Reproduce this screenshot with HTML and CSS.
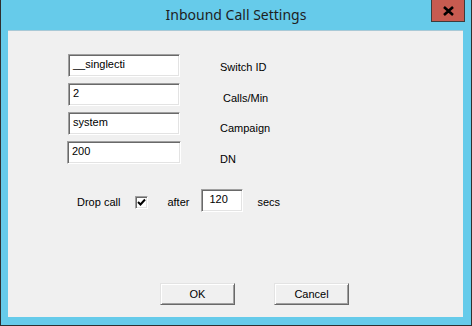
FILE: index.html
```html
<!DOCTYPE html>
<html lang="en">
<head>
    <meta charset="UTF-8">
    <title>Inbound Call Settings</title>
    <link rel="stylesheet" href="styles.css">
</head>
<body>

    <div class="window">
        <!-- Title bar -->
        <div class="titlebar">
            <span class="title">Inbound Call Settings</span>
            <button class="close-btn" aria-label="Close">
                <svg width="13" height="10" viewBox="0 0 13 10">
                    <path d="M2 1 L11 9 M11 1 L2 9" stroke="#000" stroke-width="2.6" stroke-linecap="butt"/>
                </svg>
            </button>
        </div>

        <!-- Dialog client area -->
        <div class="client">
            <div class="fields">
                <div class="field">
                    <div class="edit">__singlecti</div>
                    <span class="field-label">Switch ID</span>
                </div>
                <div class="field field-calls">
                    <div class="edit">2</div>
                    <span class="field-label">Calls/Min</span>
                </div>
                <div class="field field-campaign">
                    <div class="edit">system</div>
                    <span class="field-label">Campaign</span>
                </div>
                <div class="field field-dn">
                    <div class="edit">200</div>
                    <span class="field-label">DN</span>
                </div>
            </div>

            <div class="drop-row">
                <span class="drop-label">Drop call</span>
                <span class="checkbox">
                    <svg width="9" height="9" viewBox="0 0 9 9">
                        <path d="M1 4 L3.5 6.5 L8 1.5" stroke="#000" stroke-width="2" fill="none"/>
                    </svg>
                </span>
                <span class="after-label">after</span>
                <div class="edit edit-secs">120</div>
                <span class="secs-label">secs</span>
            </div>

            <div class="actions">
                <button class="dlg-button">OK</button>
                <button class="dlg-button">Cancel</button>
            </div>
        </div>
    </div>

</body>
</html>
```

FILE: styles.css
```css
/* Page and window frame */
body {
    margin: 0;
    font-family: 'Liberation Sans', Arial, sans-serif;
    font-size: 11px;
    color: #000;
}

.window {
    width: 472px;
    height: 326px;
    box-sizing: border-box;
    background-color: #66cbea;
    border: 1px solid #2f2f2f;
    border-top: none;
    display: flex;
    flex-direction: column;
}

.titlebar {
    position: relative;
    height: 30px;
    display: flex;
    justify-content: center;
    align-items: center;
}

.title {
    font-family: 'Noto Sans', sans-serif;
    font-size: 14px;
    color: #1e1e1e;
    margin-top: -1px;
}

.close-btn {
    position: absolute;
    top: 0;
    right: 6px;
    width: 34px;
    height: 22px;
    padding: 0;
    box-sizing: border-box;
    background-color: #c75b50;
    border: 1px solid #3c3c3c;
    border-top: none;
    display: flex;
    justify-content: center;
    align-items: center;
}

/* Client area */
.client {
    flex: 1;
    margin: 0 8px 8px 7px;
    background-color: #f0f0f0;
    border-top: 1px solid #a9c9d6;
    display: flex;
    flex-direction: column;
}

.fields {
    padding: 23px 0 0 60px;
    display: flex;
    flex-direction: column;
    gap: 6px;
}

.field {
    display: flex;
    align-items: center;
    height: 23px;
}

.field-label {
    margin-left: 40px;
    padding-top: 2px;
}

.field-calls .field-label {
    margin-left: 43px;
    padding-top: 7px;
}

.field-campaign .field-label {
    padding-top: 9px;
}

.field-dn {
    margin-left: -1px;
}

.field-dn .field-label {
    margin-left: 39px;
    padding-top: 12px;
}

/* Sunken edit box */
.edit {
    width: 112px;
    height: 23px;
    box-sizing: border-box;
    background-color: #fff;
    border-top: 1px solid #a0a0a0;
    border-left: 1px solid #a0a0a0;
    border-right: 1px solid #fff;
    border-bottom: 1px solid #fff;
    box-shadow: inset 1px 1px 0 #696969, inset -1px -1px 0 #e3e3e3;
    padding: 3px 0 0 4px;
    line-height: 13px;
}

.field-dn .edit {
    width: 114px;
}

/* Drop call row */
.drop-row {
    margin-top: 24px;
    padding-left: 69px;
    display: flex;
    align-items: center;
    height: 24px;
}

.drop-label {
    padding-top: 4px;
}

.checkbox {
    margin-left: 15px;
    margin-top: 4px;
    width: 13px;
    height: 13px;
    box-sizing: border-box;
    background-color: #fff;
    border-top: 1px solid #a0a0a0;
    border-left: 1px solid #a0a0a0;
    border-right: 1px solid #fff;
    border-bottom: 1px solid #fff;
    box-shadow: inset 1px 1px 0 #696969, inset -1px -1px 0 #e3e3e3;
    display: flex;
    justify-content: center;
    align-items: center;
}

.after-label {
    margin-left: 19px;
    padding-top: 4px;
}

.edit-secs {
    width: 42px;
    margin-left: 12px;
    padding-left: 7px;
    padding-top: 3px;
}

.secs-label {
    margin-left: 14px;
    padding-top: 4px;
}

/* Buttons */
.actions {
    margin-top: auto;
    margin-bottom: 12px;
    padding-left: 152px;
    display: flex;
    gap: 39px;
}

.dlg-button {
    width: 75px;
    height: 22px;
    padding: 0;
    box-sizing: border-box;
    font-family: 'Liberation Sans', Arial, sans-serif;
    font-size: 11px;
    color: #000;
    background-color: #f0f0f0;
    border-top: 1px solid #e3e3e3;
    border-left: 1px solid #e3e3e3;
    border-right: 1px solid #696969;
    border-bottom: 1px solid #696969;
    box-shadow: inset 1px 1px 0 #fff, inset -1px -1px 0 #a0a0a0;
}
```
